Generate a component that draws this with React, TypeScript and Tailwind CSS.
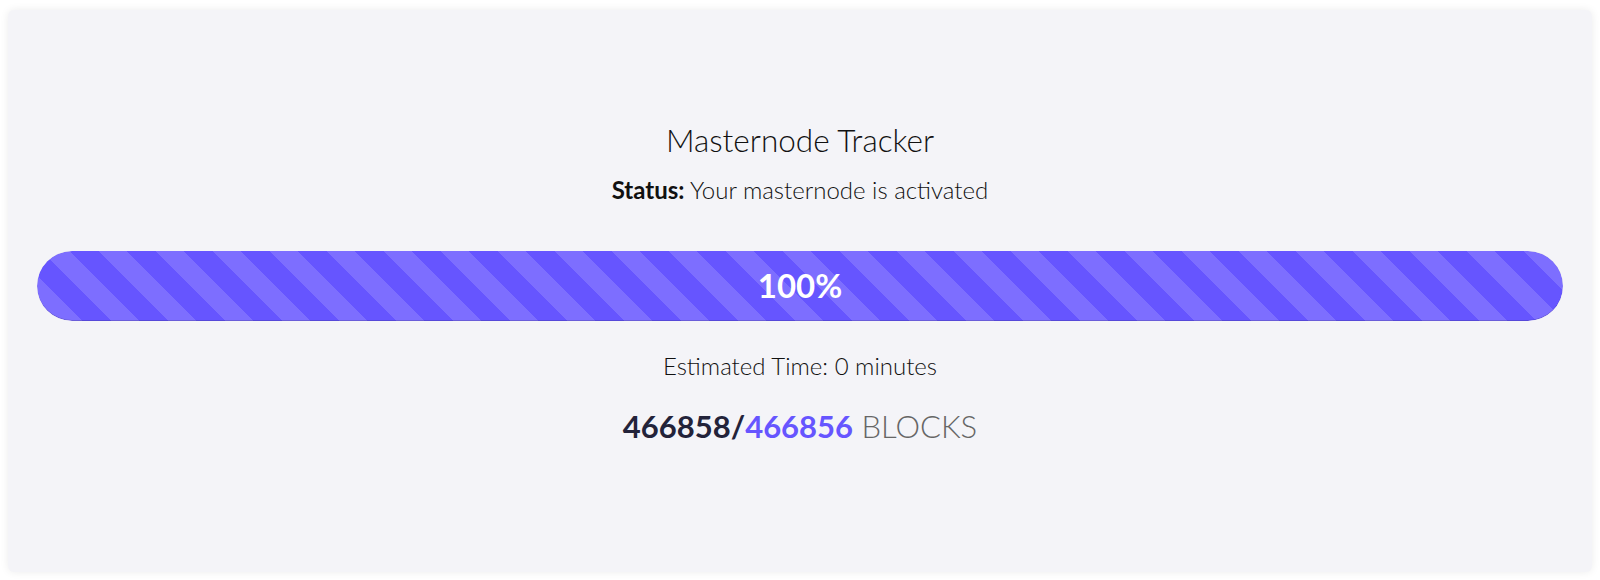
import React from "react"

const font = { fontFamily: '"Source Sans Pro", Lato, "Open Sans", sans-serif' }

function StripedBar({ percent }: { percent: number }) {
  return (
    <div className="h-[70px] w-full overflow-hidden rounded-full bg-[#f5f5f5] shadow-[inset_0_1px_2px_rgba(0,0,0,0.1)]">
      <div
        className="flex h-full items-center justify-center rounded-full bg-[#6655ff] bg-[linear-gradient(45deg,rgba(255,255,255,0.15)_25%,transparent_25%,transparent_50%,rgba(255,255,255,0.15)_50%,rgba(255,255,255,0.15)_75%,transparent_75%,transparent)] bg-size-[57px_57px] bg-position-[4px_0] shadow-[inset_0_-1px_0_rgba(0,0,0,0.15)]"
        style={{ width: `${percent}%` }}
      >
        <span className="text-[33px] font-bold text-white">{percent}%</span>
      </div>
    </div>
  )
}

export default function App() {
  return (
    <div className="min-h-[580px] bg-white px-2 pt-[10px] pb-2" style={font}>
      <div className="flex h-[562px] flex-col items-center rounded-md bg-[#f4f4f8] px-[29px] pt-[110px] shadow-[0_0_8px_rgba(0,0,0,0.08)]">
        <h1 className="text-[31.5px] leading-[40px] font-light text-[#111]">Masternode Tracker</h1>
        <p className="mt-[15px] text-[24px] leading-[30px] font-light text-[#111]">
          <span className="font-bold">Status:</span> Your masternode is activated
        </p>
        <div className="mt-[46px] w-full">
          <StripedBar percent={100} />
        </div>
        <p className="mt-[30px] text-[24px] leading-[30px] font-light text-[#111]">Estimated Time: 0 minutes</p>
        <p className="mt-[27px] text-[31px] leading-[36px]">
          <span className="font-bold text-[#23233a]">466858/</span>
          <span className="font-bold text-[#6655ff]">466856</span>
          <span className="font-light text-[#666]"> BLOCKS</span>
        </p>
      </div>
    </div>
  )
}
